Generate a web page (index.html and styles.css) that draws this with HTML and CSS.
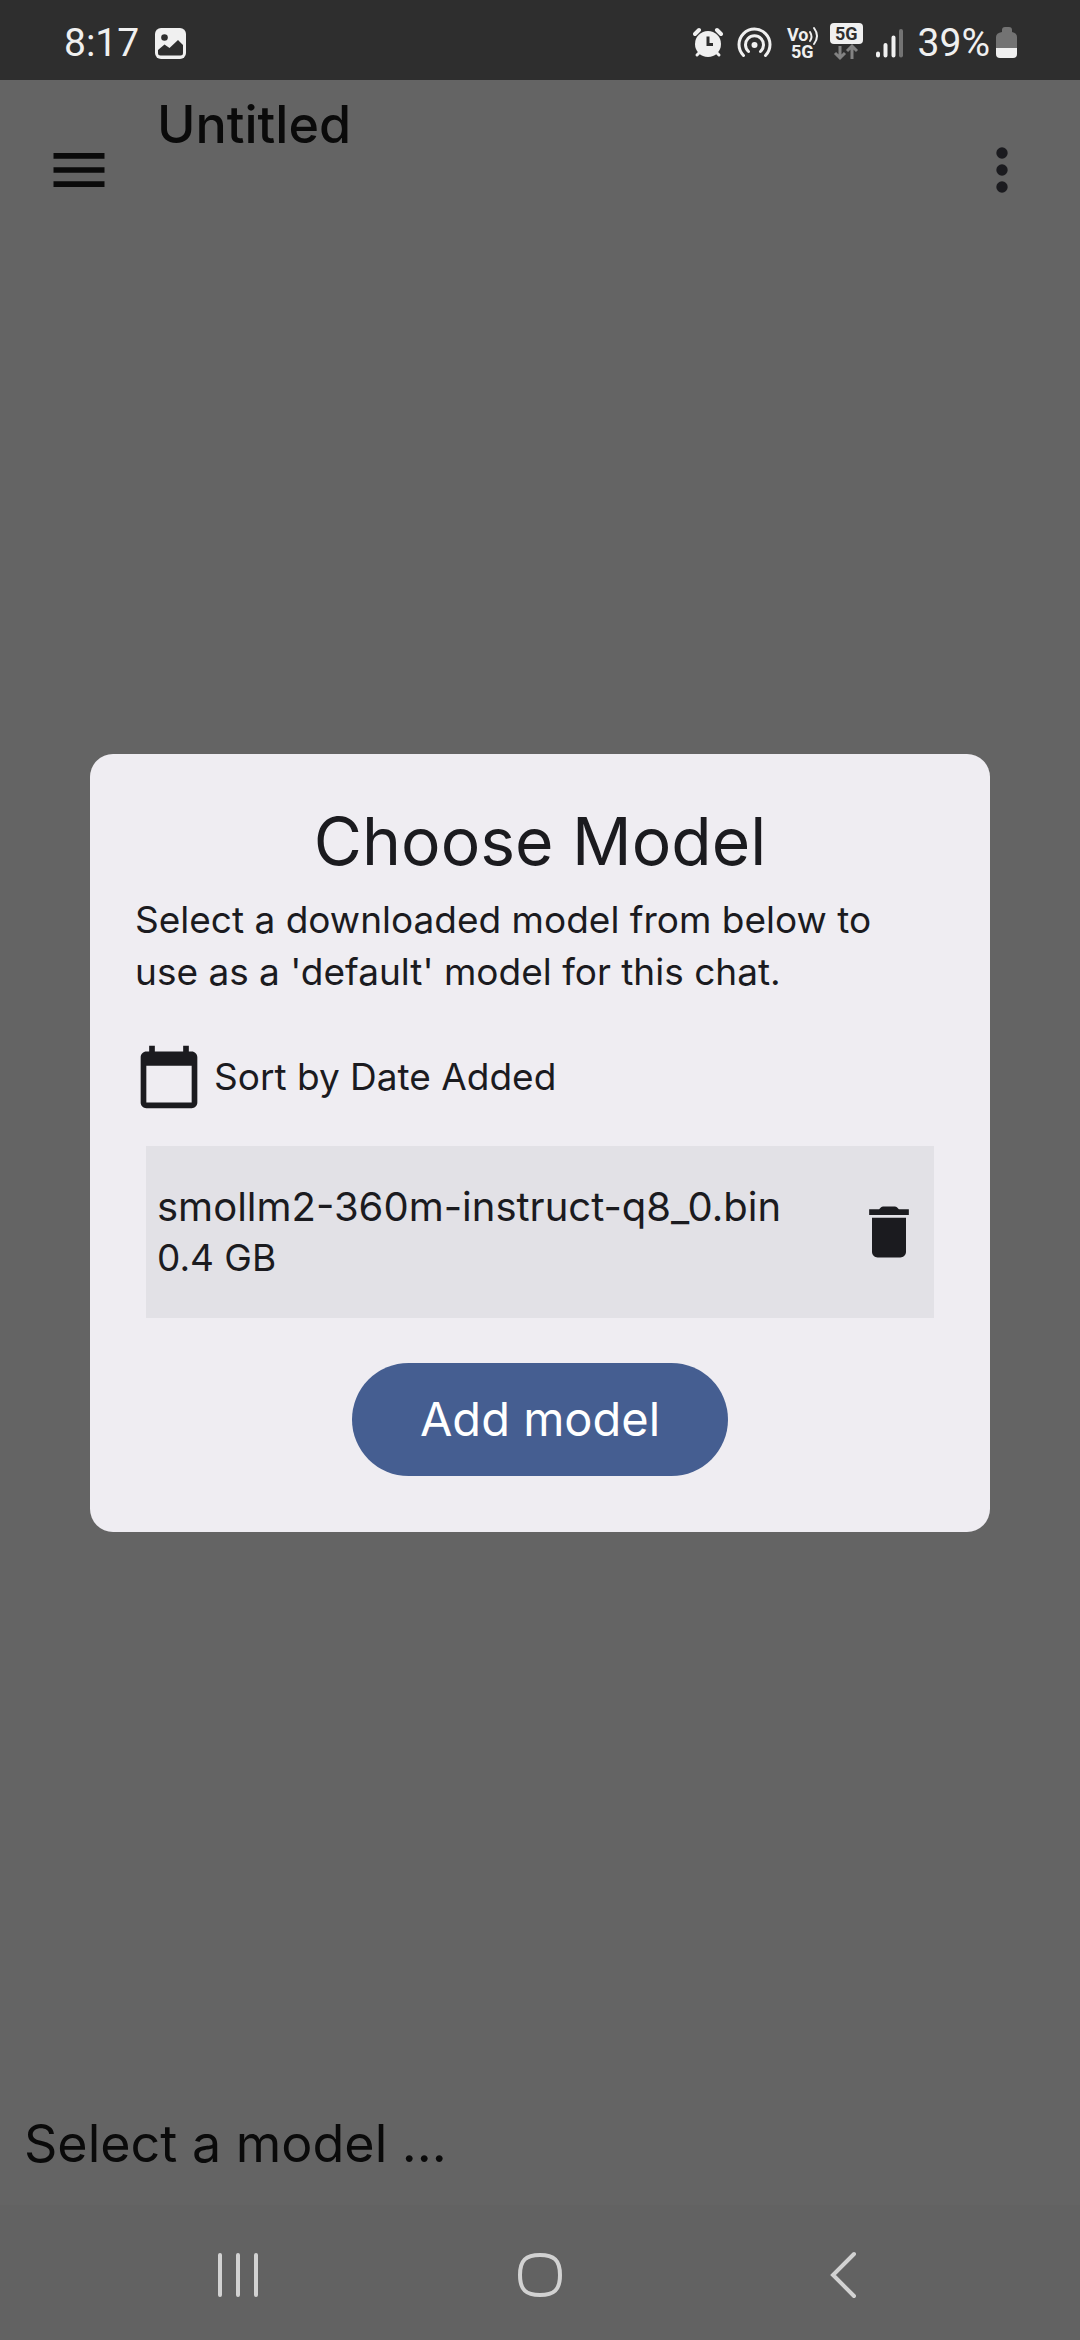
FILE: index.html
```html
<!DOCTYPE html>
<html lang="en">
<head>
<meta charset="utf-8">
<meta name="viewport" content="width=device-width, initial-scale=1">
<title>Untitled</title>
<link rel="stylesheet" href="styles.css">
</head>
<body>
<div class="status">
  <span class="status-text">8:17</span>
  <svg class="photo" width="32" height="32" viewBox="0 0 32 32" aria-hidden="true">
    <rect x="1" y="1" width="31" height="31" rx="6" fill="#f0f0f0"/>
    <circle cx="10.500" cy="10.500" r="3.300" fill="#2e2e2e"/>
    <path d="M4 23l6.500-5.500 5 3.500 8.500-8 5 5v8q0 2.500-2.500 2.500h-20q-2.500 0-2.500-2.500z" fill="#2e2e2e"/>
  </svg>
  <svg class="signals" width="212" height="40" viewBox="0 2 212 40" aria-hidden="true">
    <g fill="#f0f0f0" stroke="#f0f0f0" stroke-linecap="round">
      <circle cx="15" cy="23" r="13" stroke="none"/>
      <path d="M2 13l4-4M28 13l-4-4" stroke-width="4"/>
      <path d="M7 31l-3 3M23 31l3 3" stroke-width="3"/>
      <path d="M15 15.500v8h5" fill="none" stroke="#2e2e2e" stroke-width="3" stroke-linecap="butt"/>
    </g>
    <g fill="none" stroke="#f0f0f0" stroke-width="3" stroke-linecap="round">
      <path d="M50.500 34.500a15.500 15.500 0 1 1 22 0"/>
      <path d="M55.500 30.500a9 9 0 1 1 12 0"/>
      <circle cx="61.500" cy="24" r="3" fill="#f0f0f0" stroke="none"/>
    </g>
    <text x="94" y="20" class="mini">Vo</text>
    <path d="M117 11q3 5 0 9M121 7q6 8 0 16" fill="none" stroke="#f0f0f0" stroke-width="2" stroke-linecap="round"/>
    <text x="98" y="37" class="mini">5G</text>
    <rect x="137" y="2" width="33" height="21" rx="4" fill="#f0f0f0"/>
    <text x="142" y="19" class="mini mini-dark">5G</text>
    <path d="M147 25v12m-5-5l5 5 5-5M159 38V25m-5 5l5-5 5 5" fill="none" stroke="#828282" stroke-width="3"/>
    <g stroke-width="4" stroke-linecap="round" stroke="#f0f0f0">
      <path d="M185 32.500v2M192.500 24v10.500M200.500 16.500v18"/>
      <path d="M208 10v24.500" stroke="#737373"/>
    </g>
  </svg>
  <span class="status-text percent">39%</span>
  <svg class="battery" width="22" height="32" viewBox="0 0 22 32" aria-hidden="true">
    <path d="M6 5V3q0-3 3-3h4q3 0 3 3v2q5 1 5 5v12H0V10q0-4 6-5z" fill="#737373"/>
    <path d="M0 21h21v6q0 4-4 4H4q-4 0-4-4z" fill="#f0f0f0"/>
  </svg>
</div>

<main class="screen">
  <header class="appbar">
    <button class="icon-button" type="button" aria-label="Menu">
      <svg class="icon" viewBox="0 0 24 24"><path d="M3 18h18v-2H3zM3 13h18v-2H3zM3 6v2h18V6z"/></svg>
    </button>
    <h1 class="page-title">Untitled</h1>
    <button class="icon-button more" type="button" aria-label="More options">
      <svg class="icon" viewBox="0 0 24 24"><circle cx="12" cy="6" r="2"/><circle cx="12" cy="12" r="2"/><circle cx="12" cy="18" r="2"/></svg>
    </button>
  </header>
  <p class="prompt">Select a model ...</p>

  <div class="overlay">
    <section class="dialog" role="dialog" aria-labelledby="dialog-title">
      <h2 class="dialog-title" id="dialog-title">Choose Model</h2>
      <p class="dialog-text">Select a downloaded model from below to use as a 'default' model for this chat.</p>
      <button class="sort" type="button">
        <svg class="icon" viewBox="0 0 24 24" aria-hidden="true"><path d="M20 3h-1V1h-2v2H7V1H5v2H4c-1.100 0-2 .9-2 2v16c0 1.100.9 2 2 2h16c1.100 0 2-.9 2-2V5c0-1.100-.9-2-2-2zm0 18H4V8h16v13z"/></svg>
        <span>Sort by Date Added</span>
      </button>
      <div class="model">
        <div class="model-info">
          <span class="model-name">smollm2-360m-instruct-q8_0.bin</span>
          <span class="model-size">0.4 GB</span>
        </div>
        <button class="icon-button" type="button" aria-label="Delete model">
          <svg class="icon" viewBox="0 0 24 24"><path d="M6 19c0 1.100.9 2 2 2h8c1.100 0 2-.9 2-2V7H6v12zM15.500 4l-.71-.71c-.18-.18-.44-.29-.7-.29H9.910c-.26 0-.52.11-.7.29L8.500 4H5v2h14V4z"/></svg>
        </button>
      </div>
      <button class="add" type="button">Add model</button>
    </section>
  </div>
</main>

<nav class="navbar" aria-label="System">
  <button class="nav-button" type="button" aria-label="Recent apps">
    <svg width="48" height="48" viewBox="0 0 48 48"><path d="M6 4v40M24 4v40M42 4v40"/></svg>
  </button>
  <button class="nav-button" type="button" aria-label="Home">
    <svg width="48" height="48" viewBox="0 0 48 48"><path d="M24 4c14 0 20 5 20 20s-6 20-20 20S4 39 4 24 10 4 24 4z"/></svg>
  </button>
  <button class="nav-button" type="button" aria-label="Back">
    <svg width="48" height="48" viewBox="0 0 48 48"><path d="M36 3L15 24l21 21"/></svg>
  </button>
</nav>
</body>
</html>
```
FILE: styles.css
```css
* {
  box-sizing: border-box;
}

body {
  margin: 0;
  min-height: 100vh;
  display: flex;
  flex-direction: column;
  background: #646464;
  color: #1b1b1f;
  font-family: Inter, "Liberation Sans", sans-serif;
}

h1, h2, p {
  margin: 0;
  font-weight: 400;
}

button {
  margin: 0;
  padding: 0;
  border: 0;
  background: none;
  color: inherit;
  font: inherit;
}

.icon {
  display: block;
  width: 68px;
  height: 68px;
  fill: currentColor;
}

/* Status bar */

.status {
  display: flex;
  align-items: center;
  height: 80px;
  padding: 6px 62px 0 64px;
  background: #2e2e2e;
  color: #f0f0f0;
}

.status-text {
  font-family: Roboto, sans-serif;
  font-size: 39px;
  line-height: 48px;
}

.photo {
  margin-left: 15px;
}

.signals {
  margin-left: auto;
}

.percent {
  margin-left: 13px;
}

.battery {
  margin-left: 6px;
}

.mini {
  fill: #f0f0f0;
  font-family: Roboto, sans-serif;
  font-size: 18px;
  font-weight: 700;
}

.mini-dark {
  fill: #2e2e2e;
}

/* App screen */

.screen {
  position: relative;
  flex: 1;
  display: flex;
  flex-direction: column;
  justify-content: space-between;
}

.appbar {
  display: flex;
  align-items: center;
  height: 180px;
  padding: 0 44px 0 45px;
  color: #0a0a0a;
}

.icon-button {
  flex: none;
}

.more {
  color: #1b1b1f;
}

.page-title {
  flex: 1;
  align-self: flex-start;
  padding: 13px 44px 0;
  font-size: 52px;
  font-weight: 500;
  line-height: 64px;
}

.prompt {
  padding: 0 24px 27px;
  color: #0a0a0a;
  font-size: 52px;
  line-height: 68px;
}

/* Dialog */

.overlay {
  position: absolute;
  inset: 0;
  display: flex;
  flex-direction: column;
  justify-content: center;
  padding: 0 90px;
}

.dialog {
  display: flex;
  flex-direction: column;
  padding: 45px 45px 56px;
  border-radius: 23px;
  background: #efedf2;
}

.dialog-title {
  font-size: 66px;
  line-height: 84px;
  text-align: center;
}

.dialog-text {
  margin-top: 11px;
  padding-right: 24px;
  font-size: 37px;
  line-height: 52px;
}

.sort {
  display: flex;
  align-items: center;
  gap: 11px;
  margin-top: 45px;
  font-size: 37px;
  line-height: 52px;
}

.model {
  display: flex;
  align-items: center;
  justify-content: space-between;
  min-height: 172px;
  margin: 35px 11px 0;
  padding: 0 11px;
  background: #e2e1e6;
}

.model-info {
  display: flex;
  flex-direction: column;
  line-height: 51px;
}

.model-name {
  font-size: 40px;
}

.model-size {
  font-size: 37px;
}

.add {
  align-self: center;
  margin-top: 45px;
  padding: 24px 68px 25px;
  border-radius: 57px;
  background: #455e91;
  color: #fff;
  font-size: 47px;
  line-height: 64px;
}

/* System navigation */

.navbar {
  display: grid;
  grid-template-columns: repeat(3, 1fr);
  align-items: center;
  justify-items: center;
  height: 135px;
  padding: 4px 87px 0;
  background: #626262;
}

.nav-button svg {
  display: block;
  fill: none;
  stroke: #d2d2d2;
  stroke-width: 4;
  stroke-linecap: round;
}
```
